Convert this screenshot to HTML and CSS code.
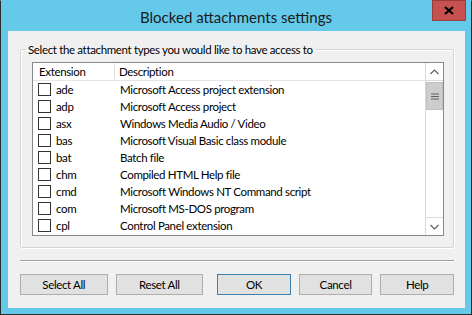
FILE: index.html
```html
<!DOCTYPE html>
<html lang="en">
<head>
  <meta charset="UTF-8">
  <title>Blocked attachments settings</title>
  <link rel="stylesheet" href="styles.css">
</head>
<body>
  <div class="window">
    <div class="titlebar">
      <span class="title">Blocked attachments settings</span>
      <div class="close">
        <svg width="10" height="9" viewBox="0 0 10 9">
          <path d="M1 1 L9 8 M9 1 L1 8" stroke="#000" stroke-width="2.2" fill="none"/>
        </svg>
      </div>
    </div>

    <div class="client">
      <fieldset class="group">
        <legend>Select the attachment types you would like to have access to</legend>
        <div class="listview">
          <div class="list-main">
            <div class="list-header">
              <div class="col-ext">Extension</div>
              <div class="col-desc">Description</div>
            </div>
            <div class="row"><div class="col-ext"><span class="check"></span>ade</div><div class="col-desc">Microsoft Access project extension</div></div>
            <div class="row"><div class="col-ext"><span class="check"></span>adp</div><div class="col-desc">Microsoft Access project</div></div>
            <div class="row"><div class="col-ext"><span class="check"></span>asx</div><div class="col-desc">Windows Media Audio / Video</div></div>
            <div class="row"><div class="col-ext"><span class="check"></span>bas</div><div class="col-desc">Microsoft Visual Basic class module</div></div>
            <div class="row"><div class="col-ext"><span class="check"></span>bat</div><div class="col-desc">Batch file</div></div>
            <div class="row"><div class="col-ext"><span class="check"></span>chm</div><div class="col-desc">Compiled HTML Help file</div></div>
            <div class="row"><div class="col-ext"><span class="check"></span>cmd</div><div class="col-desc">Microsoft Windows NT Command script</div></div>
            <div class="row"><div class="col-ext"><span class="check"></span>com</div><div class="col-desc">Microsoft MS-DOS program</div></div>
            <div class="row"><div class="col-ext"><span class="check"></span>cpl</div><div class="col-desc">Control Panel extension</div></div>
          </div>
          <div class="scrollbar">
            <div class="sb-arrow">
              <svg width="9" height="6" viewBox="0 0 9 6"><path d="M0.5 5 L4.5 1 L8.5 5" stroke="#606060" stroke-width="1.2" fill="none"/></svg>
            </div>
            <div class="sb-track">
              <div class="sb-thumb">
                <svg width="8" height="7" viewBox="0 0 8 7"><path d="M0 1 H8 M0 3.5 H8 M0 6 H8" stroke="#606060" stroke-width="1" fill="none"/></svg>
              </div>
            </div>
            <div class="sb-arrow">
              <svg width="9" height="6" viewBox="0 0 9 6"><path d="M0.5 1 L4.5 5 L8.5 1" stroke="#606060" stroke-width="1.2" fill="none"/></svg>
            </div>
          </div>
        </div>
      </fieldset>

      <div class="separator"></div>

      <div class="buttons">
        <button class="btn wide">Select All</button>
        <button class="btn wide">Reset All</button>
        <button class="btn default push">OK</button>
        <button class="btn">Cancel</button>
        <button class="btn">Help</button>
      </div>
    </div>
  </div>
</body>
</html>
```

FILE: styles.css
```css
body {
  margin: 0;
  font-family: "Lato", "Liberation Sans", sans-serif;
  font-size: 11.5px;
  letter-spacing: -0.35px;
  color: #000;
  background-color: #fff;
}

/* Marco de la ventana */
.window {
  width: 472px;
  height: 315px;
  box-sizing: border-box;
  border: 1px solid #2b2b2b;
  border-top-color: #65c9ea;
  background-color: #65c9ea;
  display: flex;
  flex-direction: column;
  position: relative;
}

.titlebar {
  height: 30px;
  display: flex;
  align-items: center;
  justify-content: center;
}

.title {
  font-size: 15px;
  letter-spacing: 0;
  color: #1b1b1b;
  padding-top: 1px;
}

.close {
  position: absolute;
  top: -1px;
  right: 5px;
  width: 34px;
  height: 21px;
  box-sizing: border-box;
  background-color: #c75050;
  border: 1px solid #9b3b3b;
  display: flex;
  align-items: center;
  justify-content: center;
}

.client {
  flex: 1;
  margin: 0 6px 6px 7px;
  background-color: #f0f0f0;
  padding: 0 11px 0 12px;
  display: flex;
  flex-direction: column;
}

/* Cuadro de grupo */
.group {
  margin: 11px 0 0 0;
  padding: 0 9px 11px 11px;
  min-width: 0;
  border: 1px solid #d5d5d5;
  border-radius: 2px;
  box-shadow: inset 1px 1px 0 #fff, 1px 1px 0 #fff;
}

.group legend {
  padding: 0 2px;
  margin-left: -6px;
  line-height: 15px;
}

.listview {
  margin-top: 5px;
  height: 172px;
  border: 1px solid #828790;
  background-color: #fff;
  display: flex;
}

.list-main {
  flex: 1;
  display: flex;
  flex-direction: column;
}

.list-header {
  height: 17px;
  display: flex;
  border-bottom: 1px solid #e5e5e5;
}

.list-header .col-ext {
  border-right: 1px solid #e5e5e5;
  padding-left: 6px;
}

.list-header .col-desc {
  padding-left: 4px;
}

.col-ext {
  width: 82px;
  box-sizing: border-box;
  display: flex;
  align-items: center;
}

.col-desc {
  display: flex;
  align-items: center;
  flex: 1;
}

.row {
  height: 17px;
  display: flex;
}

.row .col-ext {
  padding-left: 5px;
}

.row .col-desc {
  padding-left: 5px;
}

.check {
  width: 13px;
  height: 13px;
  box-sizing: border-box;
  border: 1px solid #333;
  background-color: #fff;
  margin-right: 5px;
}

/* Barra de desplazamiento */
.scrollbar {
  width: 17px;
  display: flex;
  flex-direction: column;
  border-left: 1px solid #dadada;
  background-color: #fff;
}

.sb-arrow {
  height: 17px;
  display: flex;
  align-items: center;
  justify-content: center;
  border-bottom: 1px solid #dadada;
}

.sb-arrow:last-child {
  border-bottom: none;
  border-top: 1px solid #dadada;
}

.sb-track {
  flex: 1;
}

.sb-thumb {
  height: 28px;
  margin-top: 1px;
  background-color: #cdcdcd;
  border: 1px solid #c0c0c0;
  box-sizing: border-box;
  display: flex;
  align-items: center;
  justify-content: center;
}

.separator {
  margin-top: 12px;
  height: 1px;
  background-color: #a0a0a0;
  border-bottom: 1px solid #fff;
}

.buttons {
  margin-top: 12px;
  display: flex;
  gap: 8px;
}

.btn {
  width: 74px;
  height: 21px;
  font-family: inherit;
  font-size: 11.5px;
  letter-spacing: -0.35px;
  color: #000;
  background-color: #e1e1e1;
  border: 1px solid #adadad;
  padding: 0;
}

.btn.wide {
  width: 88px;
}

.btn.push {
  margin-left: 6px;
}

.btn.default {
  border-color: #3c7fb1;
}
```
